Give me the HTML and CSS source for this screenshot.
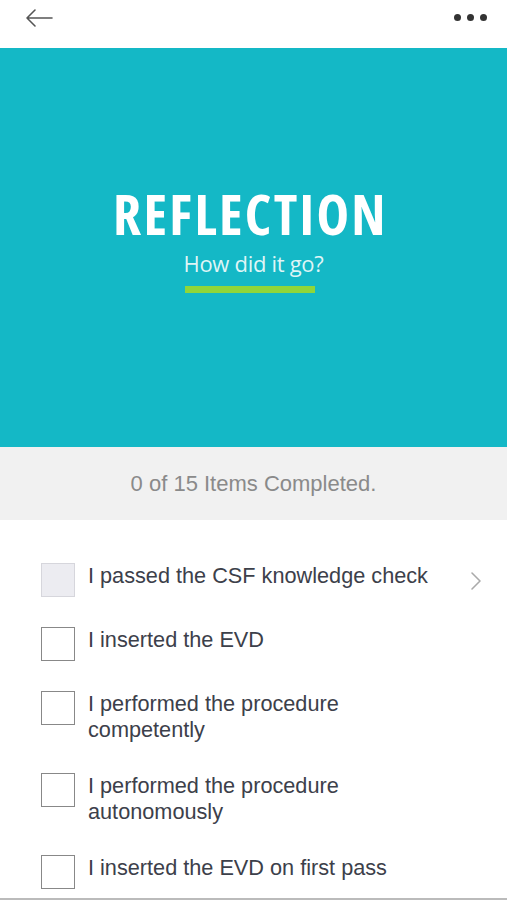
FILE: index.html
```html
<!DOCTYPE html>
<html>
<head>
<meta charset="utf-8">
<link rel="stylesheet" href="styles.css">
</head>
<body>
<div class="app">
  <header class="topbar">
    <svg class="back" width="30" height="20" viewBox="0 0 30 20"><path d="M28 10H3M11 2L3 10l8 8" fill="none" stroke="#555" stroke-width="1.6" stroke-linecap="round" stroke-linejoin="round"/></svg>
    <div class="more"><span></span><span></span><span></span></div>
  </header>
  <section class="hero">
    <h1 class="title">REFLECTION</h1>
    <p class="subtitle">How did it go?</p>
    <div class="underline"></div>
  </section>
  <div class="progress">0 of 15 Items Completed.</div>
  <ul class="list">
    <li class="item"><span class="box box-filled"></span><span class="label">I passed the CSF knowledge check</span><svg class="chev" width="14" height="22" viewBox="0 0 14 22"><path d="M3 3l8 8-8 8" fill="none" stroke="#aaa" stroke-width="1.6" stroke-linecap="round" stroke-linejoin="round"/></svg></li>
    <li class="item"><span class="box"></span><span class="label">I inserted the EVD</span></li>
    <li class="item"><span class="box"></span><span class="label">I performed the procedure<br>competently</span></li>
    <li class="item"><span class="box"></span><span class="label">I performed the procedure<br>autonomously</span></li>
    <li class="item"><span class="box"></span><span class="label">I inserted the EVD on first pass</span></li>
  </ul>
  <div class="bottomline"></div>
</div>
</body>
</html>
```

FILE: styles.css
```css
html, body { margin: 0; padding: 0; background: #fff; }
body { font-family: "Liberation Sans", Arial, sans-serif; }
.app { width: 507px; height: 900px; overflow: hidden; display: flex; flex-direction: column; }
.topbar { height: 48px; display: flex; align-items: flex-start; justify-content: space-between; padding: 8px 20px 0 24px; box-sizing: border-box; }
.back { display: block; }
.more { display: flex; gap: 6px; margin-top: 6px; }
.more span { width: 7px; height: 7px; border-radius: 50%; background: #333; display: block; }
.hero { height: 399px; background: #14b8c6; display: flex; flex-direction: column; align-items: center; box-sizing: border-box; padding-top: 141px; }
.title { margin: 0 0 0 -6px; font-family: "Open Sans", sans-serif; font-weight: 700; font-size: 55px; line-height: 50px; color: #fff; letter-spacing: 2.3px; font-stretch: condensed; }
.subtitle { margin: 12px 0 0; font-family: "Open Sans", sans-serif; font-size: 22px; line-height: 24px; color: #dff5f6; letter-spacing: -0.3px; }
.underline { width: 130px; height: 7px; background: #8fd63a; margin-top: 11px; margin-left: -7px; }
.progress { height: 73px; background: #f1f1f1; display: flex; align-items: center; justify-content: center; font-size: 22px; color: #8a8a8a; }
.list { list-style: none; margin: 0; padding: 43px 0 0 41px; display: flex; flex-direction: column; gap: 30px; }
.item { display: flex; align-items: flex-start; position: relative; }
.box { width: 34px; height: 34px; border: 1.5px solid #888; box-sizing: border-box; flex: none; }
.box-filled { background: #ececf1; border-color: #d6d6dc; }
.label { margin-left: 13px; font-size: 21.7px; line-height: 26px; color: #3c404a; }
.chev { position: absolute; right: 24px; top: 7px; }
.bottomline { margin-top: auto; height: 2px; background: #bbb; }
```
